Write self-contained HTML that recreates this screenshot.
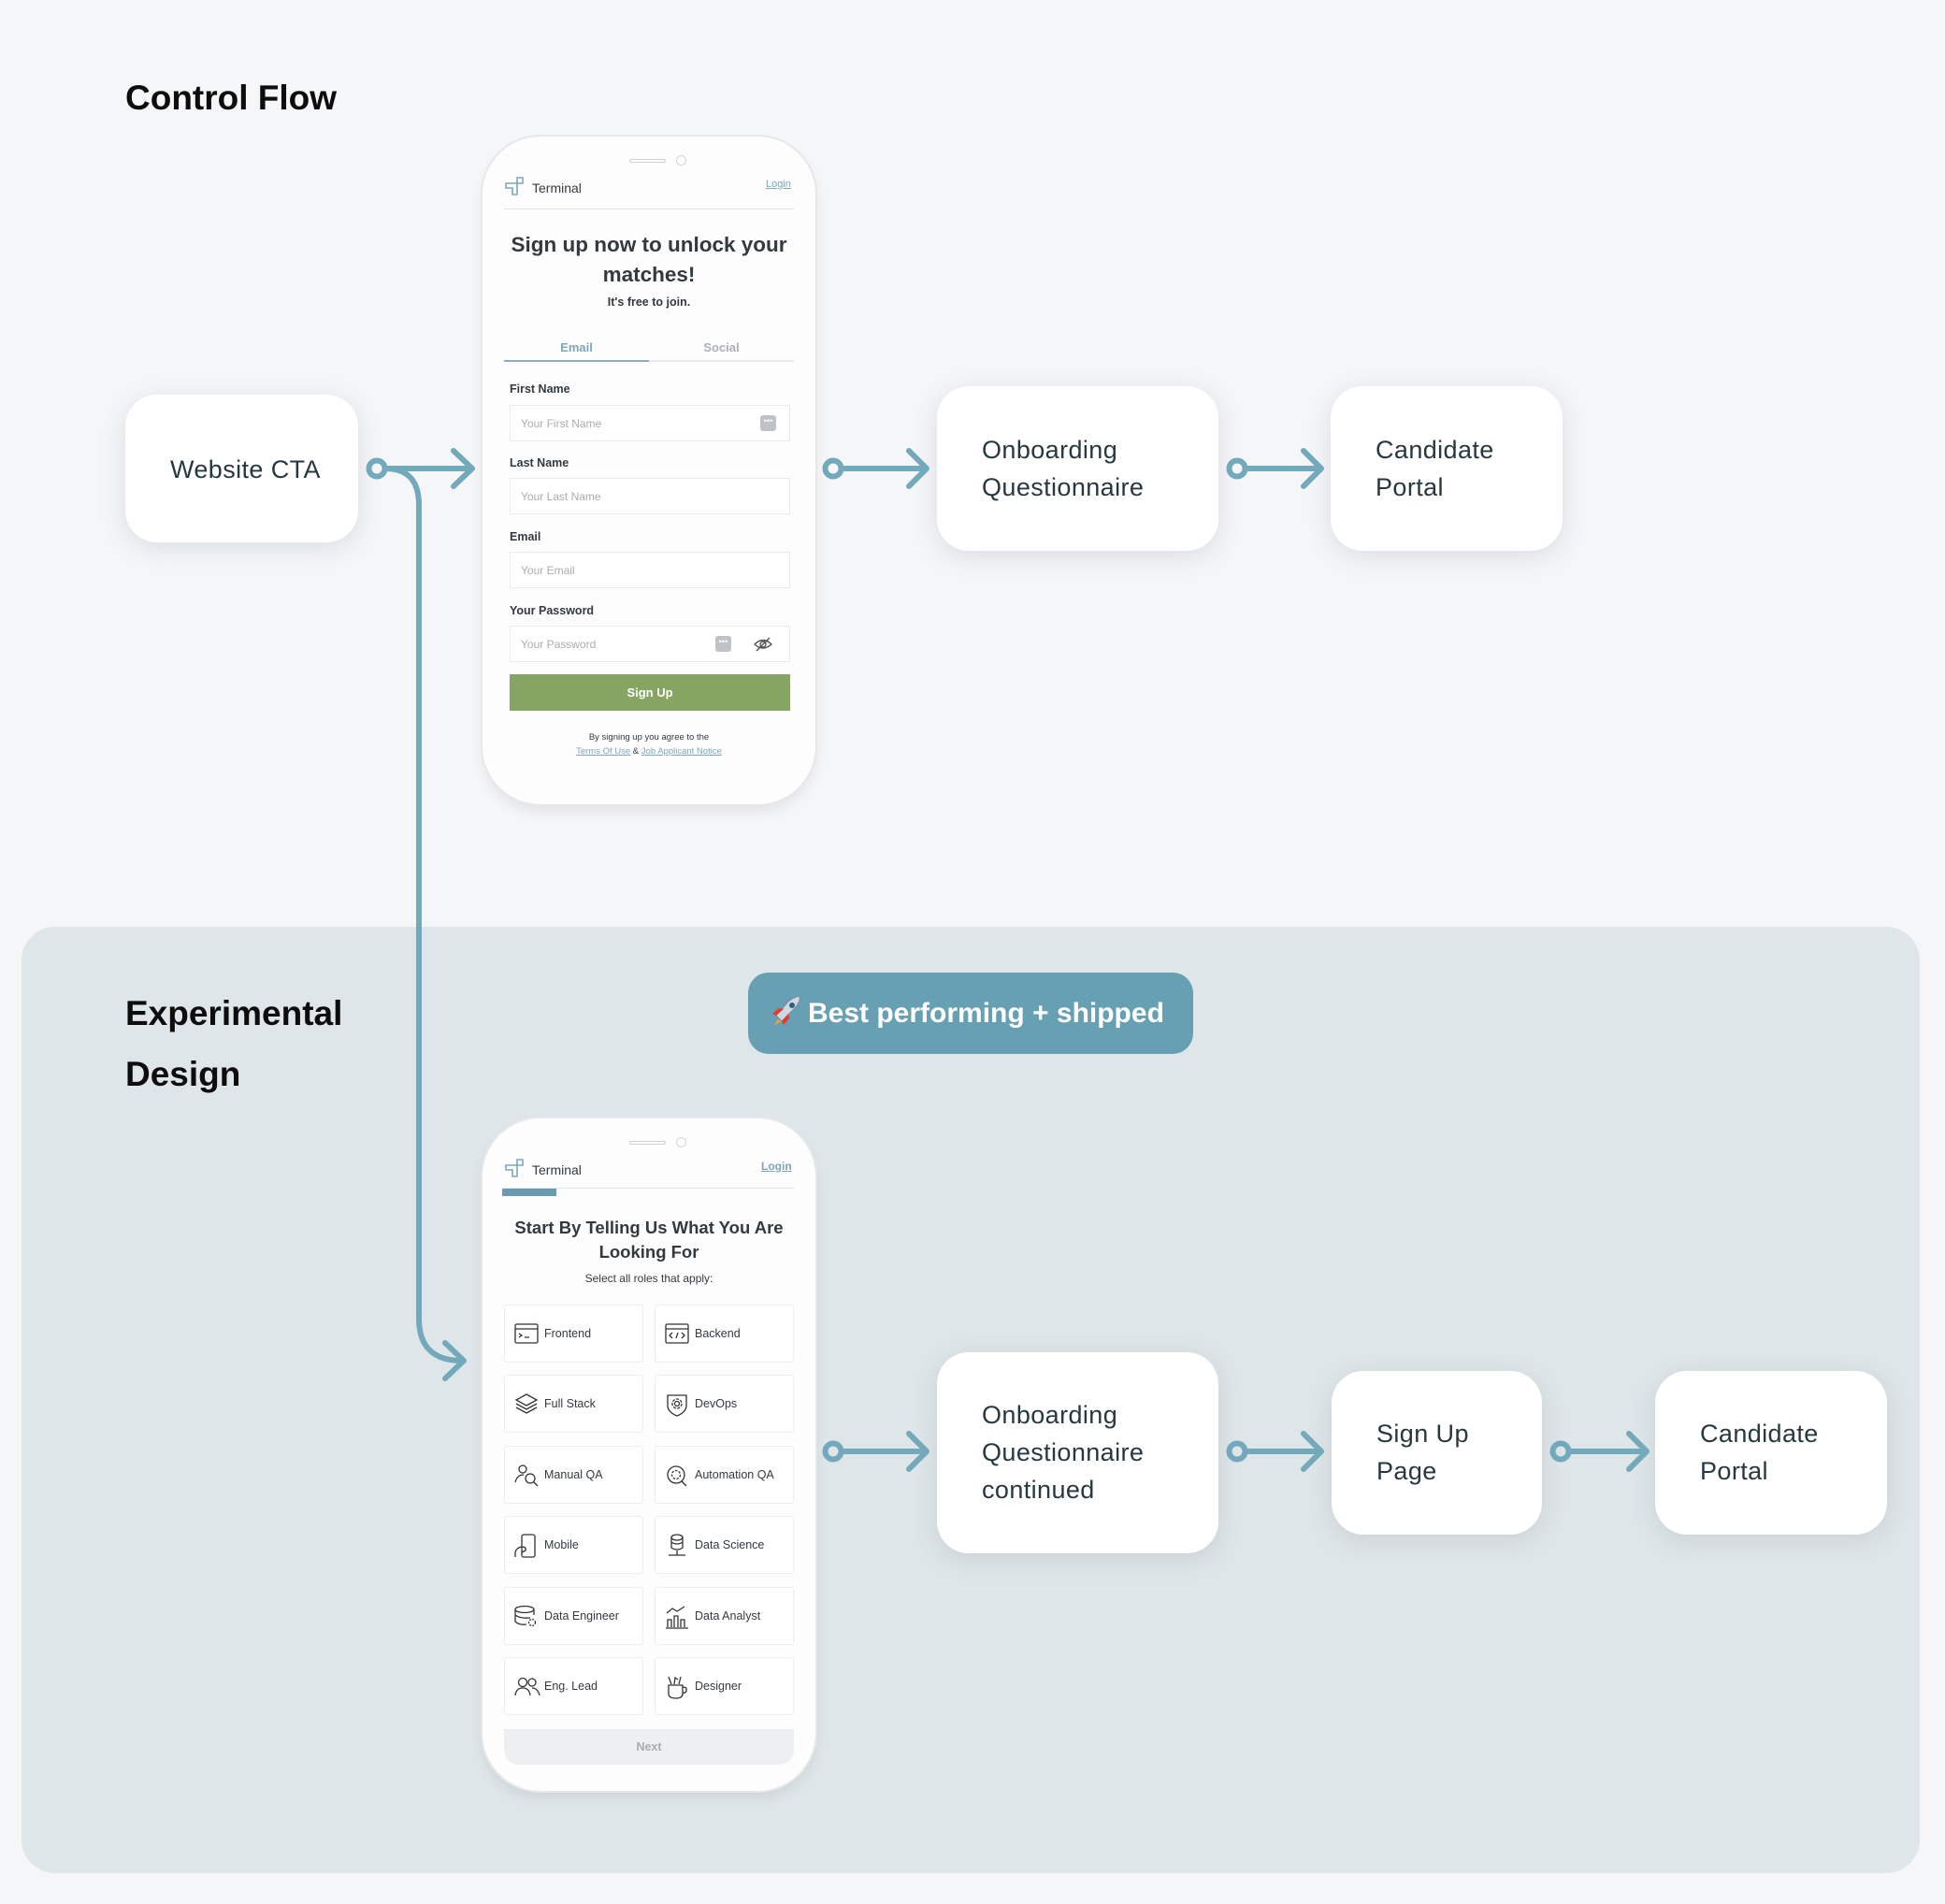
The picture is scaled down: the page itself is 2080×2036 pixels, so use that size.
<!DOCTYPE html>
<html><head><meta charset="utf-8">
<style>
*{margin:0;padding:0;box-sizing:border-box}
body{width:2080px;height:2036px;background:#f5f6f8;position:relative;overflow:hidden;font-family:"Liberation Sans",sans-serif}
.abs{position:absolute}
.panel{left:23px;top:991px;width:2030px;height:1012px;background:#dfe6e9;border-radius:36px}
.h{font-weight:bold;color:#0d0d0d;font-size:37px}
.box{position:absolute;background:#fff;border-radius:34px;box-shadow:0 6px 28px rgba(60,80,90,.14);color:#27383f;font-size:27px;line-height:40px;letter-spacing:.4px}
.box span{position:absolute;left:48px}
.phone{position:absolute;left:516px;width:356px;background:#fdfdfd;border-radius:62px;box-shadow:0 0 0 2px #e6e8ea,0 8px 14px rgba(0,0,0,.08)}
.sp{position:absolute;left:157px;top:24px;width:39px;height:4px;border-radius:2px;border:1px solid #cfd2d4}
.cam{position:absolute;left:207px;top:20px;width:11px;height:11px;border-radius:50%;border:1.5px solid #d3d6d8}
.logo{position:absolute;left:24px;top:42px}
.term{position:absolute;left:53px;font-size:14px;color:#333a3f}
.login{position:absolute;font-size:12px;color:#7ea6b8;text-decoration:underline}
.div{position:absolute;left:23px;right:23px;height:1px;background:#e3e6e8}
.c{position:absolute;left:0;right:0;text-align:center;color:#333a3f;font-weight:bold}
.lab{position:absolute;left:29px;font-size:12.5px;font-weight:bold;color:#333a3f}
.inp{position:absolute;left:29px;width:300px;height:39px;border:1.5px solid #e8eaeb;background:#fff;font-size:12px;color:#a9adb0;padding:12px 0 0 11px}
.dots{position:absolute;width:17px;height:17px;background:#bfc3c8;border-radius:3px;color:#fff;font-size:9px;text-align:center;line-height:12px}
.tile{position:absolute;width:149px;height:62px;border:1.5px solid #eceeef;border-radius:3px;background:#fff;font-size:12.5px;color:#333a3f}
.tile svg{position:absolute;left:10px;top:18px}
.tile span{position:absolute;left:42px;top:23px}
</style></head><body>
<div class="abs panel"></div>
<div class="abs h" style="left:134px;top:84px">Control Flow</div>
<div class="abs h" style="left:134px;top:1051px;line-height:65px;font-size:37px;font-weight:bold">Experimental<br>Design</div>

<div class="abs" style="left:800px;top:1040px;width:476px;height:87px;background:#67a0b3;border-radius:22px;color:#fff;font-size:30px;font-weight:bold;line-height:87px;padding-left:64px">Best performing + shipped</div>
<svg class="abs" style="left:824px;top:1064px" width="34" height="34" viewBox="0 0 34 34"><path d="M8 26 L4 32 L12 28 Z" fill="#f5a623"/><path d="M6 22 L12 28 L26 14 C31 8 32 3 31 2 C30 1 25 2 19 7 Z" fill="#cfd8e0" stroke="#7c8a96"/><circle cx="23" cy="11" r="3" fill="#2b5f8a"/><path d="M6 22 L2 20 L9 14 L14 15Z M12 28 L14 32 L20 25 L19 20Z" fill="#e33b2e"/></svg>

<!-- boxes -->
<div class="box" style="left:134px;top:422px;width:249px;height:158px"><span style="top:60px;left:48px">Website CTA</span></div>
<div class="box" style="left:1002px;top:413px;width:301px;height:176px"><span style="top:48px">Onboarding<br>Questionnaire</span></div>
<div class="box" style="left:1423px;top:413px;width:248px;height:176px"><span style="top:48px">Candidate<br>Portal</span></div>
<div class="box" style="left:1002px;top:1446px;width:301px;height:215px"><span style="top:47px">Onboarding<br>Questionnaire<br>continued</span></div>
<div class="box" style="left:1424px;top:1466px;width:225px;height:175px"><span style="top:47px">Sign Up<br>Page</span></div>
<div class="box" style="left:1770px;top:1466px;width:248px;height:175px"><span style="top:47px">Candidate<br>Portal</span></div>

<!-- arrows -->
<svg class="abs" style="left:0;top:0" width="2080" height="2036">
<g fill="none" stroke="#72a9bb" stroke-width="6" stroke-linecap="round" stroke-linejoin="round">
<path d="M412 501 H504 M485 482 L505 501 L485 520"/>
<path d="M412 501 Q448 501 448 540 V1410 Q448 1455 494 1455 M476 1436 L496 1455 L476 1474"/>
<path d="M900 501 H990 M972 482 L991 501 L972 520"/>
<path d="M1332 501 H1412 M1394 482 L1413 501 L1394 520"/>
<path d="M900 1552 H990 M972 1533 L991 1552 L972 1571"/>
<path d="M1332 1552 H1412 M1394 1533 L1413 1552 L1394 1571"/>
<path d="M1678 1552 H1760 M1742 1533 L1761 1552 L1742 1571"/>
<circle cx="403" cy="501" r="8.5"/><circle cx="891" cy="501" r="8.5"/><circle cx="1323" cy="501" r="8.5"/>
<circle cx="891" cy="1552" r="8.5"/><circle cx="1323" cy="1552" r="8.5"/><circle cx="1669" cy="1552" r="8.5"/>
</g></svg>

<!-- phone 1 -->
<div class="phone" style="top:146px;height:714px">
<div class="sp"></div><div class="cam"></div>
<svg class="logo" width="24" height="22" viewBox="0 0 24 22" fill="none" stroke="#7ea6b8" stroke-width="1.6"><path d="M1 8 H13 V2 H19 V8 H13 V20 H8 V13 H1 Z"/></svg>
<div class="term" style="top:47px">Terminal</div>
<div class="login" style="left:303px;top:45px;font-size:11px">Login</div>
<div class="div" style="top:77px"></div>
<div class="c" style="top:100px;font-size:22.5px;line-height:32px">Sign up now to unlock your<br>matches!</div>
<div class="c" style="top:170px;font-size:12.5px">It's free to join.</div>
<div class="abs" style="left:23px;top:218px;width:155px;text-align:center;font-size:13px;font-weight:bold;color:#7ea6b8">Email</div>
<div class="abs" style="left:178px;top:218px;width:155px;text-align:center;font-size:13px;font-weight:bold;color:#adb1b4">Social</div>
<div class="div" style="top:239px;height:2px;background:#e6e8ea"></div>
<div class="abs" style="left:23px;top:239px;width:155px;height:2px;background:#8db0bf"></div>
<div class="lab" style="top:263px">First Name</div>
<div class="inp" style="top:287px">Your First Name<div class="dots" style="left:267px;top:10px">•••</div></div>
<div class="lab" style="top:342px">Last Name</div>
<div class="inp" style="top:365px">Your Last Name</div>
<div class="lab" style="top:421px">Email</div>
<div class="inp" style="top:444px">Your Email</div>
<div class="lab" style="top:500px">Your Password</div>
<div class="inp" style="top:523px">Your Password<div class="dots" style="left:219px;top:10px">•••</div>
<svg class="abs" style="left:259px;top:10px" width="22" height="17" viewBox="0 0 22 17" fill="none" stroke="#555" stroke-width="1.4"><path d="M2 9 Q11 0 20 9 Q11 17 2 9Z"/><circle cx="11" cy="9" r="3"/><path d="M4 16 L18 2"/></svg></div>
<div class="abs" style="left:29px;top:575px;width:300px;height:39px;background:#86a562;color:#fff;font-weight:bold;font-size:13px;text-align:center;line-height:39px">Sign Up</div>
<div class="c" style="top:635px;font-size:9.5px;font-weight:normal;line-height:15px">By signing up you agree to the<br><span style="color:#7ea6b8;text-decoration:underline">Terms Of Use</span> &amp; <span style="color:#7ea6b8;text-decoration:underline">Job Applicant Notice</span></div>
</div>

<!-- phone 2 -->
<div class="phone" style="top:1196px;height:719px">
<div class="sp"></div><div class="cam"></div>
<svg class="logo" width="24" height="22" viewBox="0 0 24 22" fill="none" stroke="#7ea6b8" stroke-width="1.6"><path d="M1 8 H13 V2 H19 V8 H13 V20 H8 V13 H1 Z"/></svg>
<div class="term" style="top:47px">Terminal</div>
<div class="login" style="left:298px;top:44px;font-weight:bold">Login</div>
<div class="div" style="top:74px"></div>
<div class="abs" style="left:21px;top:75px;width:58px;height:8px;background:#6a9bb0"></div>
<div class="c" style="top:104px;font-size:18.5px;line-height:26px">Start By Telling Us What You Are<br>Looking For</div>
<div class="c" style="top:164px;font-size:12px;font-weight:normal">Select all roles that apply:</div>

<div class="tile" style="left:23px;top:199px"><svg width="26" height="24" viewBox="0 0 26 24" fill="none" stroke="#333" stroke-width="1.3"><rect x="1" y="2" width="24" height="20" rx="1.5"/><path d="M1 7 H25 M5 12 L8 14 L5 16 M11 16 H16"/></svg><span>Frontend</span></div>
<div class="tile" style="left:184px;top:199px"><svg width="26" height="24" viewBox="0 0 26 24" fill="none" stroke="#333" stroke-width="1.3"><rect x="1" y="2" width="24" height="20" rx="1.5"/><path d="M1 7 H25 M8 11 L5 14 L8 17 M18 11 L21 14 L18 17 M14 11 L12 17"/></svg><span>Backend</span></div>
<div class="tile" style="left:23px;top:274px"><svg width="26" height="26" viewBox="0 0 26 26" fill="none" stroke="#333" stroke-width="1.3"><path d="M13 2 L24 8 L13 14 L2 8Z M2 12 L13 18 L24 12 M2 16 L13 22 L24 16"/></svg><span>Full Stack</span></div>
<div class="tile" style="left:184px;top:274px"><svg width="26" height="26" viewBox="0 0 26 26" fill="none" stroke="#333" stroke-width="1.3"><path d="M3 3 H23 V14 Q23 21 13 25 Q3 21 3 14Z"/><circle cx="13" cy="12" r="2.5"/><circle cx="13" cy="12" r="5" stroke-dasharray="3 1.5"/></svg><span>DevOps</span></div>
<div class="tile" style="left:23px;top:350px"><svg width="26" height="26" viewBox="0 0 26 26" fill="none" stroke="#333" stroke-width="1.3"><circle cx="9" cy="6" r="4"/><path d="M1 20 Q3 12 10 12"/><circle cx="17" cy="16" r="5"/><path d="M21 20 L25 24"/></svg><span>Manual QA</span></div>
<div class="tile" style="left:184px;top:350px"><svg width="26" height="26" viewBox="0 0 26 26" fill="none" stroke="#333" stroke-width="1.3"><circle cx="12" cy="12" r="9"/><circle cx="12" cy="12" r="4.5" stroke-dasharray="2.5 1.5"/><path d="M18 19 L23 24"/></svg><span>Automation QA</span></div>
<div class="tile" style="left:23px;top:425px"><svg width="26" height="26" viewBox="0 0 26 26" fill="none" stroke="#333" stroke-width="1.3"><rect x="8" y="1" width="14" height="24" rx="2"/><path d="M1 25 V20 Q2 15 8 14 Q13 14 12 18 L8 20"/></svg><span>Mobile</span></div>
<div class="tile" style="left:184px;top:425px"><svg width="26" height="26" viewBox="0 0 26 26" fill="none" stroke="#333" stroke-width="1.3"><ellipse cx="13" cy="4" rx="6" ry="3"/><path d="M7 4 V15 Q13 19 19 15 V4 M7 9 Q13 13 19 9 M13 18 V23 M4 23 H22"/></svg><span>Data Science</span></div>
<div class="tile" style="left:23px;top:501px"><svg width="26" height="26" viewBox="0 0 26 26" fill="none" stroke="#333" stroke-width="1.3"><ellipse cx="11" cy="5" rx="10" ry="3.5"/><path d="M1 5 V18 Q5 22 13 21 M1 11 Q6 15 17 14 M21 5 V11"/><circle cx="19" cy="19" r="3.5" stroke-dasharray="2 1.3"/></svg><span>Data Engineer</span></div>
<div class="tile" style="left:184px;top:501px"><svg width="26" height="26" viewBox="0 0 26 26" fill="none" stroke="#333" stroke-width="1.3"><path d="M2 9 L8 4 L13 7 L21 2 M1 25 H25 M3 24 V16 H7 V24 M10 24 V12 H14 V24 M17 24 V16 H21 V24"/></svg><span>Data Analyst</span></div>
<div class="tile" style="left:23px;top:576px"><svg width="28" height="26" viewBox="0 0 28 26" fill="none" stroke="#333" stroke-width="1.3"><circle cx="9" cy="8" r="4.5"/><path d="M1 22 Q2 14 9 14 Q16 14 17 22"/><circle cx="19" cy="8" r="4"/><path d="M19 14 Q25 14 27 22"/></svg><span>Eng. Lead</span></div>
<div class="tile" style="left:184px;top:576px"><svg width="26" height="26" viewBox="0 0 26 26" fill="none" stroke="#333" stroke-width="1.3"><path d="M4 11 H19 V20 Q19 25 12 25 Q4 25 4 20Z M19 13 Q24 13 23 17 Q22 20 19 19 M7 10 L4 2 M10 10 L11 3 L14 5 M15 10 L17 2"/></svg><span>Designer</span></div>

<div class="abs" style="left:23px;top:653px;width:310px;height:38px;background:#eeeff0;border-radius:0 0 16px 16px;text-align:center;line-height:38px;font-size:12.5px;font-weight:bold;color:#a9acaf">Next</div>
</div>
</body></html>
